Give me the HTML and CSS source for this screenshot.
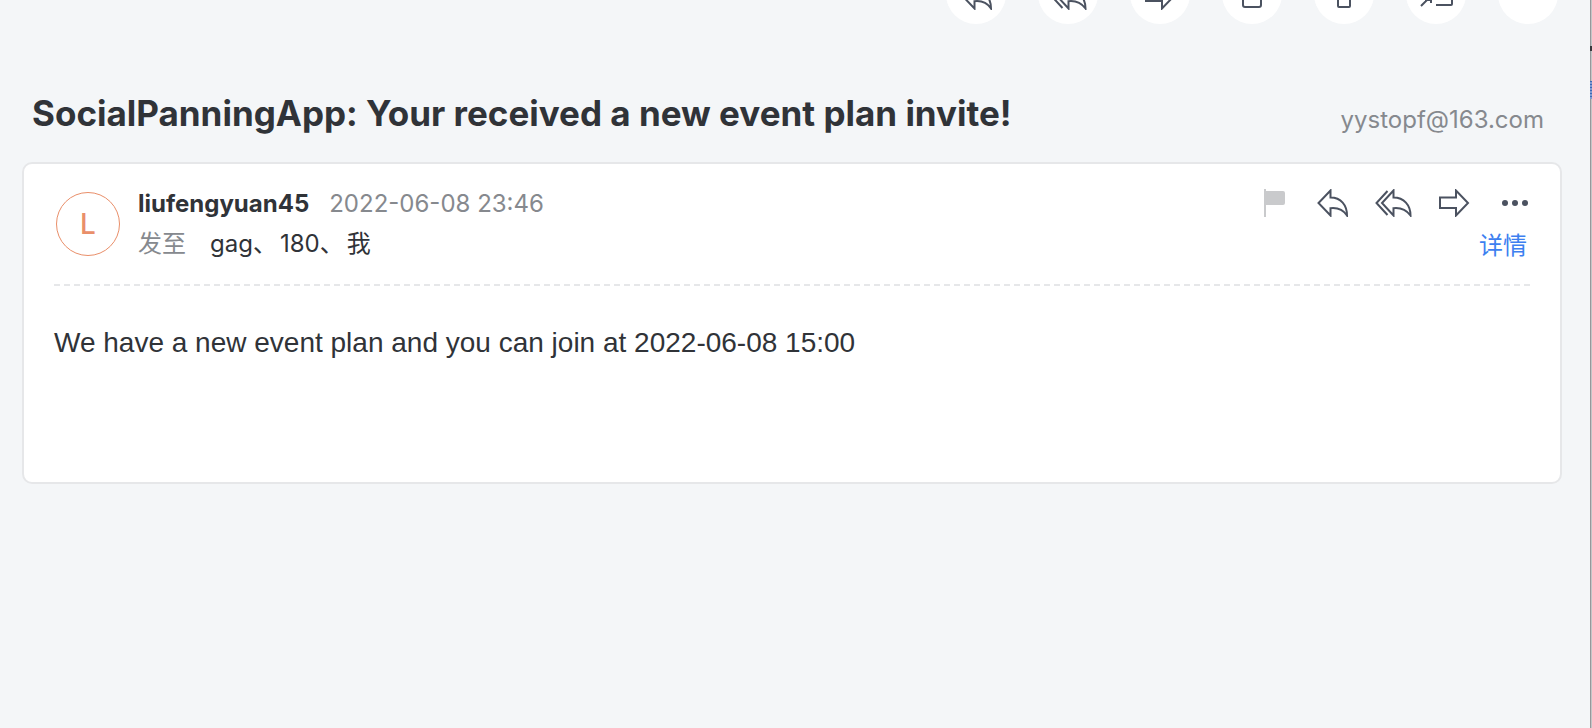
FILE: index.html
```html
<!DOCTYPE html>
<html lang="zh-CN">
<head>
<meta charset="utf-8">
<title>SocialPanningApp: Your received a new event plan invite!</title>
<link rel="stylesheet" href="styles.css">
</head>
<body>
<svg class="defs" aria-hidden="true">
  <symbol id="reply" viewBox="0 0 32 28"><path d="M14.500 1.500 L2.500 14 L14.500 26.500 V19.200 C21 18.500 27 20.500 31 26.500 C31 16 25 8.500 14.500 8.500 Z"/></symbol>
  <symbol id="reply-all" viewBox="0 0 38 28"><path d="M13.500 2 L2.500 14 L13.500 26"/><path d="M19.500 1.500 L8 14 L19.500 26.500 V19.200 C26 18.500 32 20.500 36.500 26.500 C36.500 16 30 8.500 19.500 8.500 Z"/></symbol>
  <symbol id="forward" viewBox="0 0 32 28"><path d="M2 8.500 H18 V1.500 L30 14 L18 26.500 V19 H2 Z"/></symbol>
</svg>
<div class="app">
  <main class="reader">
    <header class="toolbar">
      <button class="round" aria-label="回复"><svg class="icon" width="32" height="28"><use href="#reply"/></svg></button>
      <button class="round" aria-label="回复全部"><svg class="icon" width="38" height="28"><use href="#reply-all"/></svg></button>
      <button class="round" aria-label="转发"><svg class="icon" width="32" height="28"><use href="#forward"/></svg></button>
      <button class="round" aria-label="归档"><svg class="icon" width="32" height="28" viewBox="0 0 32 28"><path d="M7 4 V23 Q7 25 9 25 H23 Q25 25 25 23 V4 Z"/></svg></button>
      <button class="round" aria-label="删除"><svg class="icon" width="32" height="28" viewBox="0 0 32 28"><path d="M10 4 V24 Q10 25 11 25 H21 Q22 25 22 24 V4 Z"/></svg></button>
      <button class="round" aria-label="移动"><svg class="icon" width="34" height="28" viewBox="0 0 34 28"><path d="M2 24 L11 15 M6 18 H12 V21 M17 23 H32 Q33 23 33 22 V6 H13"/></svg></button>
      <button class="round" aria-label="更多"></button>
    </header>
    <div class="subject">
      <h1 class="title">SocialPanningApp: Your received a new event plan invite!</h1>
      <span class="account">yystopf@163.com</span>
    </div>
    <article class="card">
      <div class="meta">
        <div class="avatar">L</div>
        <div class="people">
          <div class="line"><strong class="sender">liufengyuan45</strong><time class="muted">2022-06-08 23:46</time></div>
          <div class="line to"><span class="muted">发至</span><span class="names"><span>gag、</span><span>180、</span><span>我</span></span></div>
        </div>
        <div class="side">
          <div class="actions">
            <button class="plain" aria-label="标记"><svg class="flag" width="26" height="28" viewBox="0 0 26 28"><path d="M0 0 H2 V2 H19 Q21 2 21 4 V14 Q21 16 19 16 H2 V28 H0 Z"/></svg></button>
            <button class="plain" aria-label="回复"><svg class="icon" width="32" height="28"><use href="#reply"/></svg></button>
            <button class="plain" aria-label="回复全部"><svg class="icon" width="38" height="28"><use href="#reply-all"/></svg></button>
            <button class="plain" aria-label="转发"><svg class="icon" width="32" height="28"><use href="#forward"/></svg></button>
            <button class="plain" aria-label="更多"><svg class="dots" width="34" height="28" viewBox="0 0 34 28"><circle cx="9" cy="14" r="3"/><circle cx="19" cy="14" r="3"/><circle cx="29" cy="14" r="3"/></svg></button>
          </div>
          <a class="details" href="#">详情</a>
        </div>
      </div>
      <p class="body">We have a new event plan and you can join at 2022-06-08 15:00</p>
    </article>
  </main>
  <div class="edge"></div>
</div>
</body>
</html>
```

FILE: styles.css
```css
* { box-sizing: border-box; }
body { margin: 0; background: #f4f6f8; color: #303338; font: 24px/40px Inter, "Noto Sans CJK SC", sans-serif; }
button { border: 0; padding: 0; cursor: pointer; font: inherit; }
.defs { position: absolute; width: 0; height: 0; }
.app { display: flex; min-height: 100vh; }
.reader { flex: 1; min-width: 0; padding: 0 28px 0 22px; }
.edge {
  width: 2px;
  background:
    linear-gradient(#38393d, #38393d) 0 46px / 2px 5px no-repeat,
    repeating-linear-gradient(#3f68b5 0 1px, #7f9bd0 1px 3px) 0 81px / 2px 18px no-repeat,
    linear-gradient(90deg, #97989b 50%, #c4c5c7 50%);
}
.toolbar { display: flex; justify-content: flex-end; align-items: flex-end; gap: 32px; height: 24px; padding-right: 4px; overflow: hidden; }
.round { flex: none; display: grid; place-items: center; width: 60px; height: 60px; padding-top: 4px; border-radius: 50%; background: #fff; }
.icon { display: block; fill: none; stroke: #4b5260; stroke-width: 2; }
.subject { display: flex; justify-content: space-between; align-items: flex-end; padding: 64px 18px 24px 10px; }
.title { margin: 0; font-size: 35px; line-height: 50px; font-weight: 700; }
.account { line-height: 36px; }
.account, .muted { color: #86898e; }
.card { min-height: 322px; padding: 0 30px; border: 2px solid #e6e7e9; border-radius: 10px; background: #fff; }
.meta { display: flex; padding: 20px 0; background: repeating-linear-gradient(90deg, #e6e7e9 0 6px, transparent 6px 10px) bottom / 100% 2px no-repeat; }
.avatar { width: 64px; height: 64px; margin: 8px 18px 0 2px; border: 1px solid #e98f6a; border-radius: 50%; color: #e98f6a; font-size: 28px; line-height: 62px; font-weight: 500; text-align: center; }
.people { flex: 1; }
.line { display: flex; gap: 20px; }
.to { gap: 24px; }
.names { display: flex; gap: 3px; }
.side { display: flex; flex-direction: column; align-items: flex-end; gap: 4px; }
.actions { display: flex; align-items: center; gap: 26px; height: 38px; }
.plain { background: none; }
.plain svg { display: block; }
.flag { fill: #c9cacc; }
.dots { fill: #4b5260; }
.details { padding-right: 3px; color: #3d7ff0; text-decoration: none; }
.body { margin: 37px 0; font: 28px/40px "Liberation Sans", Arial, sans-serif; }
```
